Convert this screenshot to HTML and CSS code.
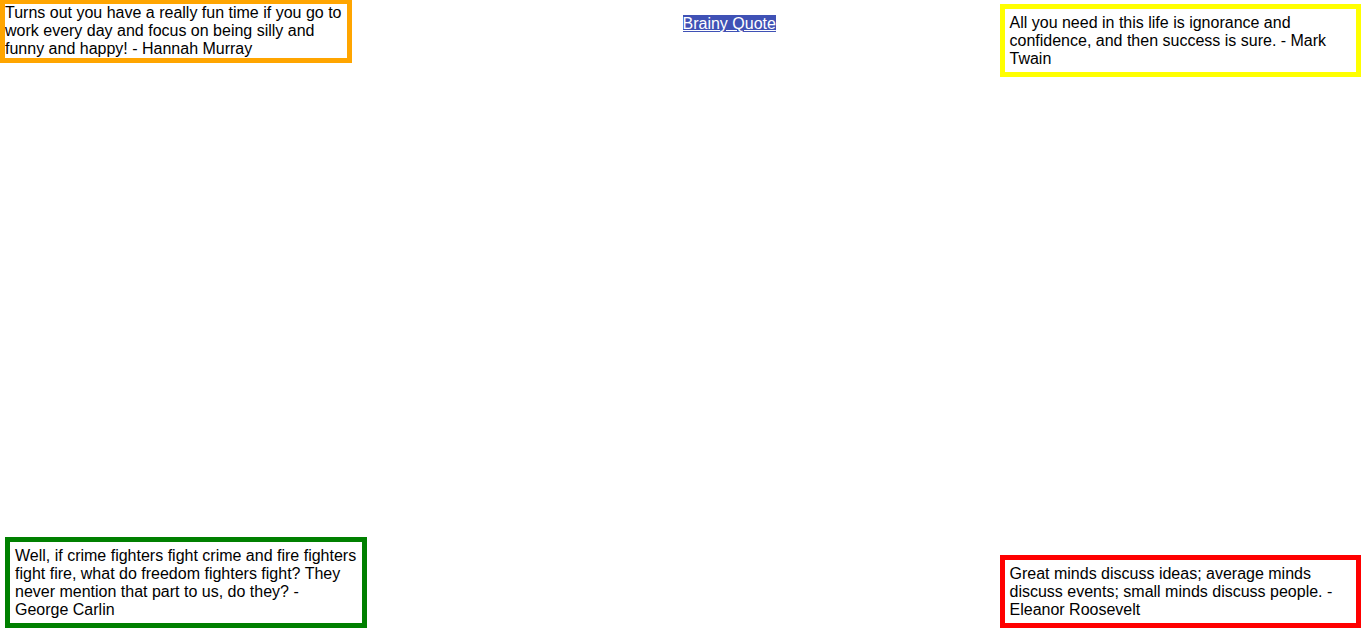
FILE: index.html
```html
<!DOCTYPE html>
<html lang="en">
<head>
<meta charset="utf-8">
<title>Quotes</title>
<link rel="stylesheet" href="styles.css">
</head>
<body>
<div class="page">
  <div class="top">
    <div class="quote orange">Turns out you have a really fun time if you go to work every day and focus on being silly and funny and happy! - Hannah Murray</div>
    <div class="center"><a class="brand" href="#">Brainy Quote</a></div>
    <div class="quote padded yellow">All you need in this life is ignorance and confidence, and then success is sure. - Mark Twain</div>
  </div>
  <div class="bottom">
    <div class="quote padded green">Well, if crime fighters fight crime and fire fighters fight fire, what do freedom fighters fight? They never mention that part to us, do they? - George Carlin</div>
    <div class="quote padded red">Great minds discuss ideas; average minds discuss events; small minds discuss people. - Eleanor Roosevelt</div>
  </div>
</div>
</body>
</html>
```

FILE: styles.css
```css
html, body {
  margin: 0;
  padding: 0;
  background: #ffffff;
}
body {
  font-family: "Liberation Sans", Arial, sans-serif;
  font-size: 16px;
  color: #000000;
  overflow: hidden;
}
.page {
  height: 634px;
  display: flex;
  flex-direction: column;
  justify-content: space-between;
}
.top {
  display: flex;
  align-items: flex-start;
}
.bottom {
  display: flex;
  justify-content: space-between;
  align-items: flex-end;
  padding: 0 5px 6px 5px;
}
.quote {
  width: 341.5px;
  border: 5px solid;
  box-sizing: content-box;
}
.padded {
  padding: 5px 5px 4px 5px;
}
.orange {
  border-color: #ffa500;
  margin-top: -1px;
}
.yellow {
  border-color: #ffff00;
  margin-top: 4px;
  margin-right: 5px;
}
.green {
  border-color: #008000;
}
.red {
  border-color: #ff0000;
}
.center {
  flex: 1;
  padding-top: 15px;
  padding-left: 331px;
}
.brand {
  color: #ffffff;
  background: #3f51b5;
  text-decoration: underline;
}
```
